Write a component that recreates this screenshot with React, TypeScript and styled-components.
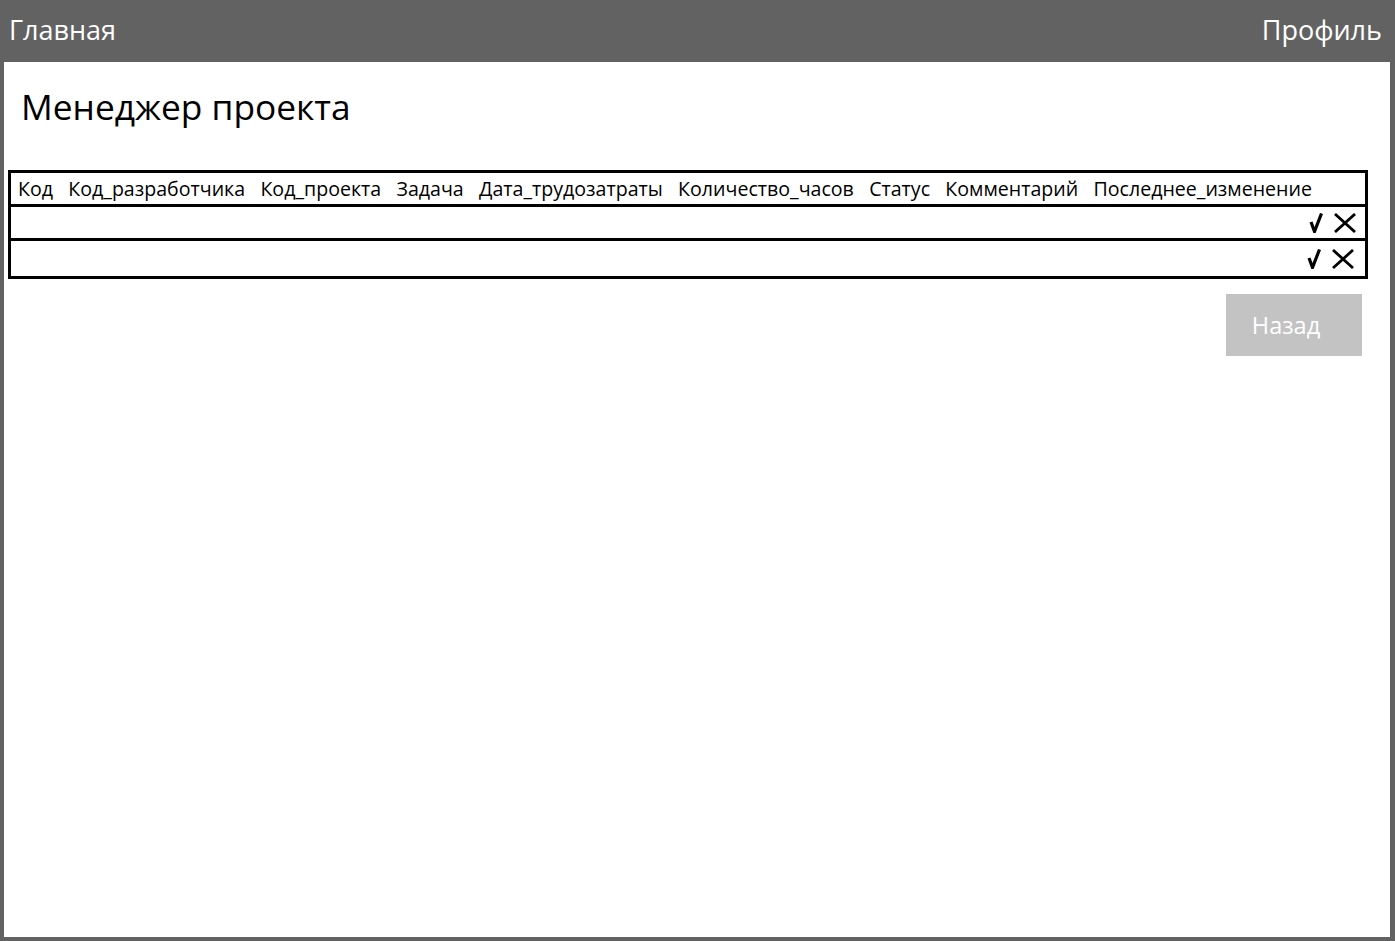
import React from "react";
import styled, { createGlobalStyle } from "styled-components";

const Global = createGlobalStyle`
  html, body { margin: 0; padding: 0; background: #626262; }
  body { font-family: "Open Sans", "Noto Sans", sans-serif; }
  * { box-sizing: border-box; }
`;

const Frame = styled.div`
  width: 1395px;
  height: 941px;
  background: #626262;
  display: flex;
  flex-direction: column;
  padding: 0 5px 4px 4px;
`;

const TopBar = styled.header`
  height: 62px;
  display: flex;
  align-items: center;
  justify-content: space-between;
  padding: 0 8px 3px 5px;
  color: #ffffff;
  font-size: 27px;
`;

const NavLink = styled.span`
  letter-spacing: 0;
`;

const Content = styled.main`
  flex: 1;
  background: #ffffff;
  padding: 22px 22px 0 4px;
  display: flex;
  flex-direction: column;
`;

const Title = styled.h1`
  margin: 0 0 0 13px;
  font-weight: 400;
  font-size: 35.3px;
  line-height: 45px;
  color: #000;
`;

const Table = styled.div`
  margin-top: 41px;
  border: 3px solid #000;
  display: flex;
  flex-direction: column;
`;

const HeaderRow = styled.div`
  height: 34px;
  display: flex;
  align-items: center;
  gap: 15.3px;
  padding-left: 7px;
  border-bottom: 3px solid #000;
  font-size: 19.6px;
  color: #000;
  white-space: nowrap;
`;

const Row = styled.div<{ $last?: boolean }>`
  height: ${(p) => (p.$last ? "35px" : "34px")};
  display: flex;
  align-items: center;
  justify-content: flex-end;
  gap: 10px;
  padding-right: ${(p) => (p.$last ? "10px" : "8px")};
  border-bottom: ${(p) => (p.$last ? "none" : "3px solid #000")};
`;

const Footer = styled.div`
  display: flex;
  justify-content: flex-end;
  margin-top: 15px;
`;

const BackButton = styled.button`
  width: 136px;
  height: 62px;
  border: none;
  background: #c3c3c3;
  color: #ffffff;
  font-family: "Open Sans", "Noto Sans", sans-serif;
  font-size: 23.5px;
  padding: 0 16px 0 0;
  margin-right: 6px;
`;

const CheckIcon = () => (
  <svg width="14" height="20" viewBox="0 0 14 20">
    <path d="M2 9 L5.5 18.5 L12.5 0.5" fill="none" stroke="#000" strokeWidth="3.2" strokeLinejoin="miter" />
  </svg>
);

const CrossIcon = () => (
  <svg width="24" height="20" viewBox="0 0 24 20">
    <path d="M2 1 L22 19 M22 1 L2 19" fill="none" stroke="#000" strokeWidth="2.8" />
  </svg>
);

const columns = [
  "Код",
  "Код_разработчика",
  "Код_проекта",
  "Задача",
  "Дата_трудозатраты",
  "Количество_часов",
  "Статус",
  "Комментарий",
  "Последнее_изменение",
];

export default function App() {
  return (
    <>
      <Global />
      <Frame>
        <TopBar>
          <NavLink>Главная</NavLink>
          <NavLink>Профиль</NavLink>
        </TopBar>
        <Content>
          <Title>Менеджер проекта</Title>
          <Table>
            <HeaderRow>
              {columns.map((c) => (
                <span key={c}>{c}</span>
              ))}
            </HeaderRow>
            <Row>
              <CheckIcon />
              <CrossIcon />
            </Row>
            <Row $last>
              <CheckIcon />
              <CrossIcon />
            </Row>
          </Table>
          <Footer>
            <BackButton>Назад</BackButton>
          </Footer>
        </Content>
      </Frame>
    </>
  );
}
